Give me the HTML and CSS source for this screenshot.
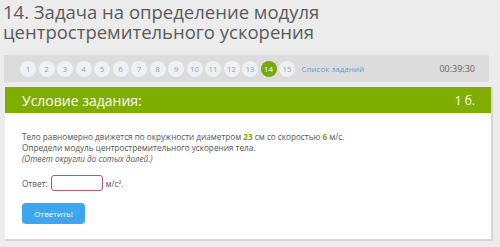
FILE: index.html
```html
<!DOCTYPE html>
<html lang="ru">
<head>
    <meta charset="UTF-8">
    <title>Задача 14</title>
    <link rel="stylesheet" href="styles.css">
</head>
<body>

<h1 class="task-title">14. Задача на определение модуля центростремительного ускорения</h1>

<nav class="task-nav">
    <div class="task-nums">
        <span class="num">1</span>
        <span class="num">2</span>
        <span class="num">3</span>
        <span class="num">4</span>
        <span class="num">5</span>
        <span class="num">6</span>
        <span class="num">7</span>
        <span class="num">8</span>
        <span class="num">9</span>
        <span class="num">10</span>
        <span class="num">11</span>
        <span class="num">12</span>
        <span class="num">13</span>
        <span class="num current">14</span>
        <span class="num">15</span>
        <a class="task-list" href="#">Список заданий</a>
    </div>
    <span class="timer">00:39:30</span>
</nav>

<section class="task-card">
    <div class="task-head">
        <span>Условие задания:</span>
        <span class="points">1 б.</span>
    </div>
    <div class="task-body">
        <p class="task-text">
            Тело равномерно движется по окружности диаметром <b class="val">23</b> см со скоростью <b class="val">6</b> м/с.<br>
            Определи модуль центростремительного ускорения тела.<br>
            <i>(Ответ округли до сотых долей.)</i>
        </p>
        <div class="answer-row">
            <label for="answer">Ответ:</label>
            <input type="text" id="answer">
            <span>м/с².</span>
        </div>
        <button type="button">Ответить!</button>
    </div>
</section>

</body>
</html>
```

FILE: styles.css
```css
body {
    margin: 0;
    background-color: #ececec;
    font-family: 'Open Sans', sans-serif;
    color: #555;
    height: 247px;
    overflow: hidden;
}
.task-title {
    margin: 0;
    padding: 2px 0 0 3px;
    font-size: 18.5px;
    font-weight: normal;
    line-height: 20px;
    color: #5a5a5a;
    height: 53px;
}
.task-nav {
    display: flex;
    align-items: center;
    justify-content: space-between;
    margin: 0 11px 0 4px;
    height: 27px;
    background-color: #dcdcdc;
    padding: 0 14px 0 16px;
}
.task-nums {
    display: flex;
    align-items: center;
    gap: 2.5px;
}
.num {
    width: 16px;
    height: 16px;
    border-radius: 50%;
    background-color: #eef0f3;
    color: #9aa3ad;
    font-size: 8px;
    display: flex;
    align-items: center;
    justify-content: center;
}
.num.current {
    background-color: #75a90c;
    color: #fff;
}
.task-list {
    margin-left: 4px;
    color: #5d9fd8;
    font-size: 8px;
    text-decoration: none;
}
.timer {
    font-size: 9px;
    color: #666;
}
.task-card {
    margin: 5px 7px 0 5px;
    background-color: #fff;
    border-right: 2px solid #d6d6d6;
    border-bottom: 2px solid #d6d6d6;
    height: 152px;
}
.task-head {
    display: flex;
    justify-content: space-between;
    align-items: center;
    background-color: #7fae00;
    color: #fff;
    height: 26px;
    padding: 0 16px 0 17px;
    font-size: 14px;
}
.task-head .points {
    font-size: 12px;
}
.task-body {
    padding: 18px 17px 0;
    font-size: 8.2px;
    color: #555;
}
.task-text {
    margin: 0;
    line-height: 11px;
}
.val {
    color: #7fa800;
    font-weight: bold;
}
.answer-row {
    display: flex;
    align-items: center;
    gap: 3px;
    margin-top: 11px;
}
.answer-row input {
    width: 50px;
    height: 14px;
    border: 1px solid #b05a7a;
    border-radius: 3px;
    padding: 0;
    margin: 0;
}
button {
    margin-top: 12px;
    width: 63px;
    height: 21px;
    border: none;
    border-radius: 4px;
    background-color: #3ea6ee;
    color: #fff;
    font-family: 'Open Sans', sans-serif;
    font-size: 8px;
}
```
